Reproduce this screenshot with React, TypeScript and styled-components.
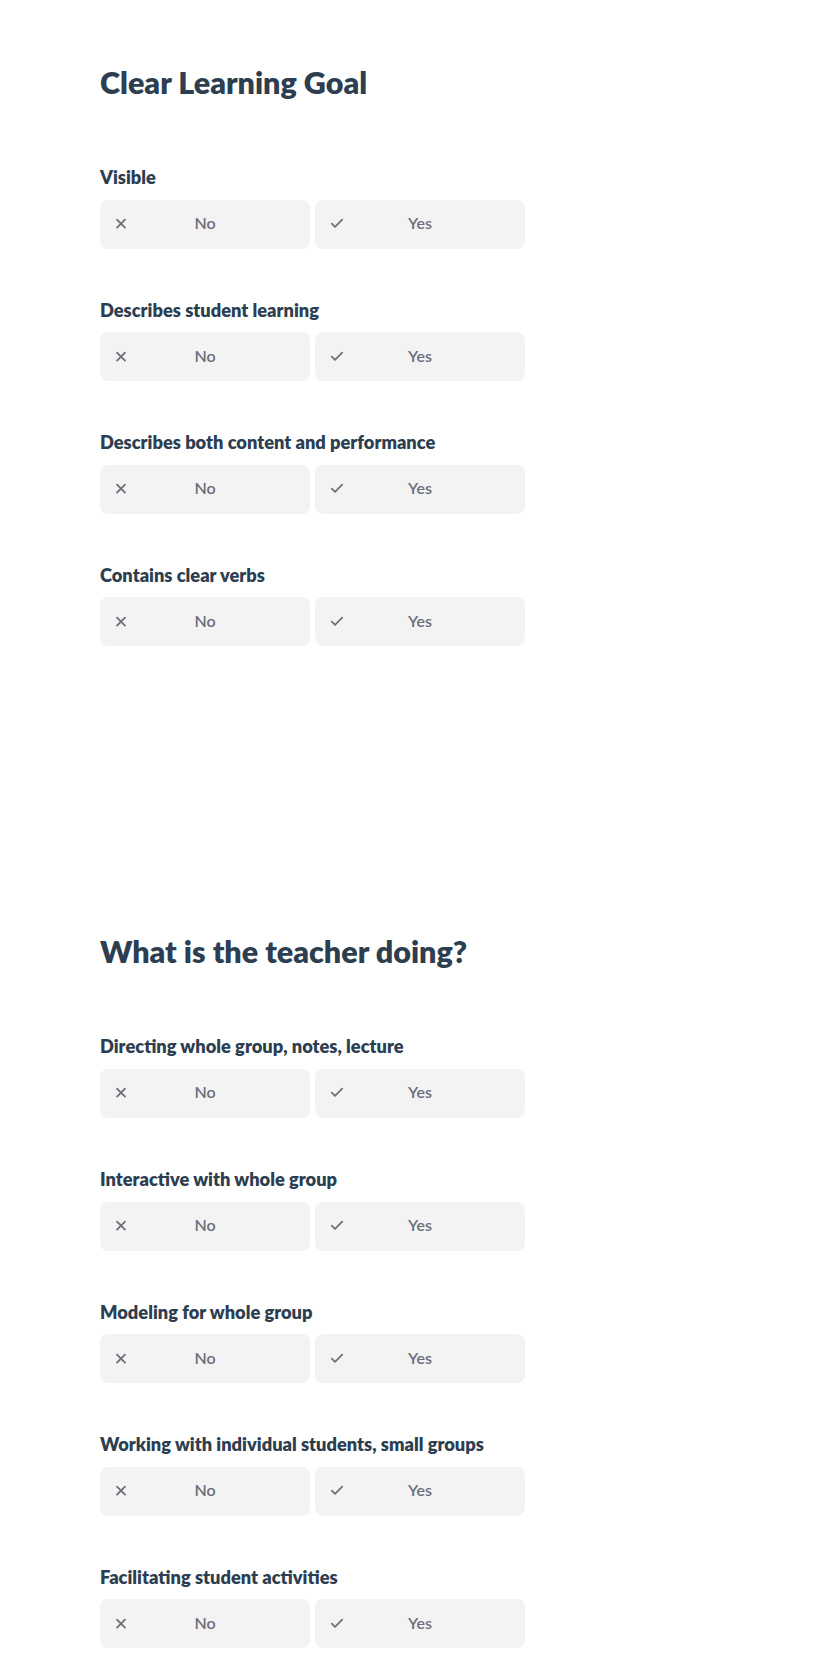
import React from "react";
import styled, { createGlobalStyle } from "styled-components";

const GlobalStyle = createGlobalStyle`
  html, body {
    margin: 0;
    padding: 0;
    background: #ffffff;
  }
  body {
    font-family: Lato, "Open Sans", "Liberation Sans", sans-serif;
    -webkit-font-smoothing: antialiased;
  }
`;

const Page = styled.main`
  padding: 64px 0 40px 100px;
  display: flex;
  flex-direction: column;
  gap: 287px;
`;

const Section = styled.section`
  display: flex;
  flex-direction: column;
  width: 425px;
`;

const Heading = styled.h1`
  margin: 0 0 66px 0;
  font-size: 30.5px;
  line-height: 36px;
  font-weight: 800;
  color: #2c3e50;
`;

const Rows = styled.div`
  display: flex;
  flex-direction: column;
  gap: 50px;
`;

const Row = styled.div`
  display: flex;
  flex-direction: column;
`;

const Label = styled.div`
  font-size: 18.25px;
  line-height: 21.6px;
  font-weight: 800;
  color: #2c3e50;
  margin-bottom: 12px;
  margin-top: 1px;
  white-space: nowrap;
`;

const Choices = styled.div`
  display: grid;
  grid-template-columns: 1fr 1fr;
  gap: 5px;
  margin-top: -1px;
`;

const Choice = styled.button`
  display: grid;
  grid-template-columns: 18px 1fr 18px;
  align-items: center;
  height: 49px;
  padding: 0 12px 2px 12px;
  border: none;
  border-radius: 8px;
  background: #f3f3f4;
  color: #6b6e78;
  font-family: inherit;
  font-size: 16px;
  line-height: 18px;
  font-weight: 600;
  cursor: pointer;
  text-align: center;
`;

const IconBox = styled.svg`
  width: 18px;
  height: 18px;
  display: block;
`;

const ChoiceText = styled.span`
  display: block;
`;

const XIcon = () => (
  <IconBox viewBox="0 0 18 18" fill="none" stroke="currentColor" strokeWidth={1.8} strokeLinecap="round">
    <path d="M5 5.6l8 8M13 5.6l-8 8" />
  </IconBox>
);

const CheckIcon = () => (
  <IconBox viewBox="0 0 18 18" fill="none" stroke="currentColor" strokeWidth={1.7} strokeLinecap="round" strokeLinejoin="round">
    <path d="M4.8 9.6l3.2 3.2 7.2-7.2" />
  </IconBox>
);

const sections = [
  {
    title: "Clear Learning Goal",
    items: [
      "Visible",
      "Describes student learning",
      "Describes both content and performance",
      "Contains clear verbs",
    ],
  },
  {
    title: "What is the teacher doing?",
    items: [
      "Directing whole group, notes, lecture",
      "Interactive with whole group",
      "Modeling for whole group",
      "Working with individual students, small groups",
      "Facilitating student activities",
    ],
  },
];

export default function App() {
  return (
    <>
      <GlobalStyle />
      <Page>
        {sections.map((s) => (
          <Section key={s.title}>
            <Heading>{s.title}</Heading>
            <Rows>
              {s.items.map((item) => (
                <Row key={item}>
                  <Label>{item}</Label>
                  <Choices>
                    <Choice type="button">
                      <XIcon />
                      <ChoiceText>No</ChoiceText>
                      <span />
                    </Choice>
                    <Choice type="button">
                      <CheckIcon />
                      <ChoiceText>Yes</ChoiceText>
                      <span />
                    </Choice>
                  </Choices>
                </Row>
              ))}
            </Rows>
          </Section>
        ))}
      </Page>
    </>
  );
}
